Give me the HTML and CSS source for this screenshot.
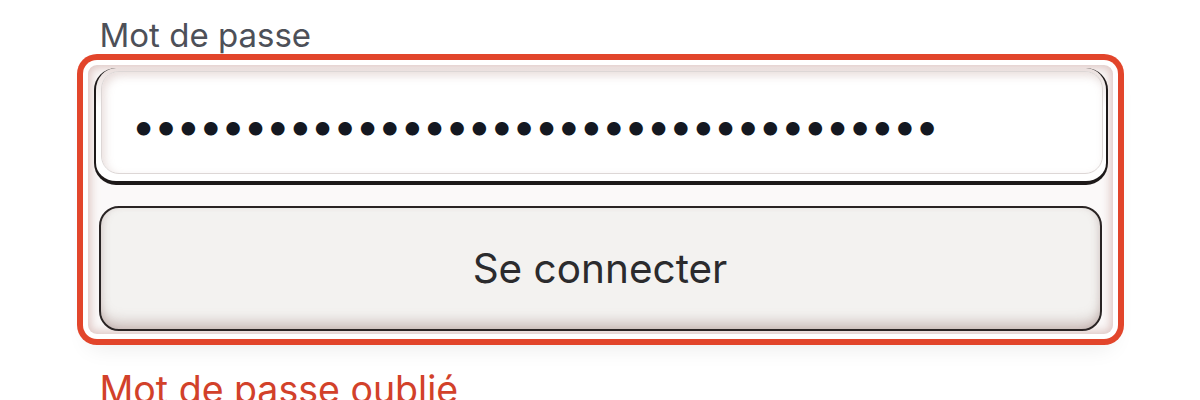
FILE: index.html
```html
<!DOCTYPE html>
<html lang="fr">
<head>
<meta charset="utf-8">
<title>Connexion</title>
<link rel="stylesheet" href="styles.css">
</head>
<body>
<form class="form">
  <label class="label" for="pw">Mot de passe</label>
  <div class="group">
    <div class="pw-wrap">
      <input class="pw" id="pw" type="password" value="abcdefghijklmnopqrstuvwxyz0123456789">
    </div>
    <button class="btn" type="button">Se connecter</button>
  </div>
  <a class="forgot" href="#">Mot de passe oublié</a>
</form>
</body>
</html>
```

FILE: styles.css
```css
html, body {
  margin: 0;
  background: #ffffff;
  font-family: Inter, "Noto Sans", sans-serif;
}

.form {
  width: 1025px;
  margin: 0 auto;
  padding-top: 16px;
}

.label {
  display: block;
  font-size: 33px;
  line-height: 38px;
  color: #4d5058;
  padding-left: 12px;
  margin-bottom: 11px;
}

.group {
  display: flex;
  flex-direction: column;
  gap: 21px;
  padding: 3px 11px 3px 6px;
  border-radius: 9px;
  background: #fbf9f9;
  box-shadow:
    inset 0 0 9px 3px rgba(200, 160, 155, 0.55),
    0 0 0 5px #ffffff,
    0 0 0 11px #e2452b,
    0 14px 22px rgba(0, 0, 0, 0.08);
}

.pw-wrap {
  margin-right: -6px;
  padding: 3px 3px 7px 5px;
  border: 2px solid #1d1919;
  border-top: 0;
  border-bottom-width: 4px;
  border-radius: 22px;
  background: linear-gradient(#eadfdd, #ffffff 35%);
}

.pw {
  display: block;
  box-sizing: border-box;
  width: 100%;
  height: 103px;
  padding: 4px 0 0 30px;
  border: 1px solid #ddd7d6;
  border-radius: 18px;
  background: #ffffff;
  box-shadow: inset 3px 4px 8px rgba(175, 135, 130, 0.28);
  font-family: Inter, sans-serif;
  font-size: 43px;
  letter-spacing: -1.8px;
  color: #141821;
  outline: none;
}

.btn {
  display: block;
  height: 125px;
  margin-left: 5px;
  border: 2px solid #2a2424;
  border-radius: 20px;
  background: #f3f2f0;
  box-shadow:
    inset 0 -12px 14px -6px rgba(140, 105, 100, 0.4),
    inset 6px 0 10px -6px rgba(140, 105, 100, 0.25),
    inset -6px 0 10px -6px rgba(140, 105, 100, 0.25);
  font-family: Inter, sans-serif;
  font-size: 40.5px;
  color: #2b2b2d;
  cursor: pointer;
}

.forgot {
  display: block;
  margin-top: 34px;
  padding-left: 12px;
  font-size: 37.5px;
  line-height: 44px;
  color: #d2412a;
  text-decoration: none;
}
```
